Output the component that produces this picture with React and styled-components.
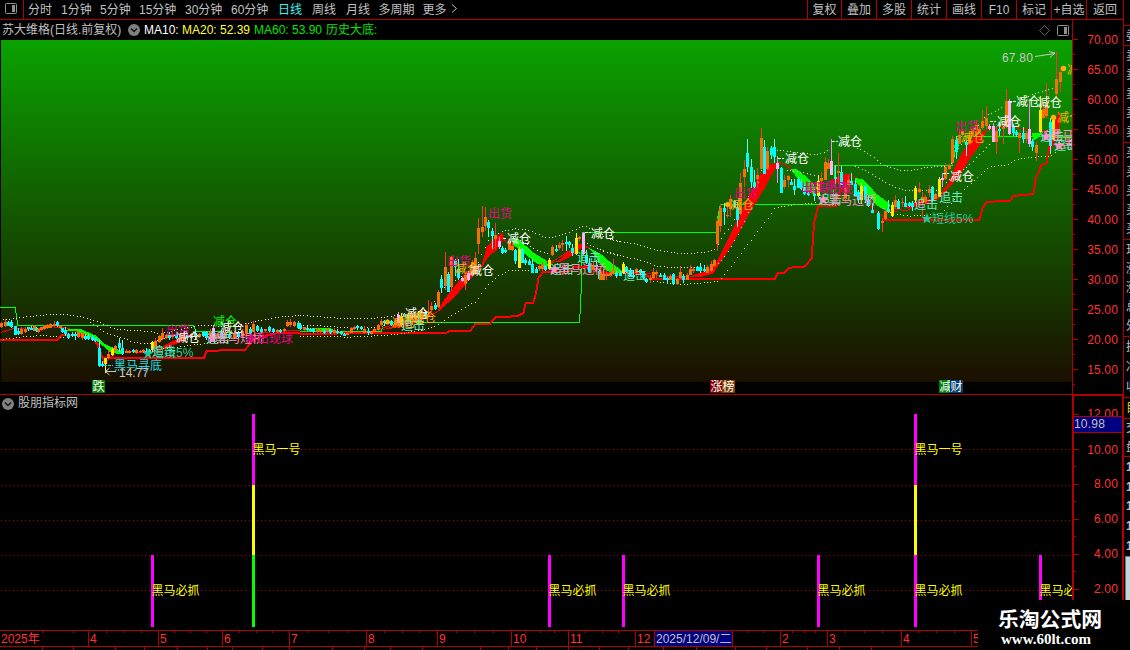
import styled, { createGlobalStyle } from "styled-components";

const RED = "#b00000";

const GlobalStyle = createGlobalStyle`
  * {
    box-sizing: border-box;
  }
  body {
    margin: 0;
    background: #000;
    color: #c0c0c0;
    font-family: "Liberation Sans", "Noto Sans CJK SC", sans-serif;
    font-size: 12px;
    overflow: hidden;
  }
`;

const Desk = styled.div`
  position: relative;
  display: flex;
  width: 1130px;
  height: 650px;
  overflow: hidden;
  background: #000;
`;

const Main = styled.div`
  display: flex;
  flex-direction: column;
  width: 1123px;
`;

const Toolbar = styled.div`
  display: flex;
  height: 20px;
  border-bottom: 1px solid ${RED};
  line-height: 20px;
`;

const PanelToggle = styled.div`
  display: flex;
  align-items: center;
  width: 24px;
  margin-right: 4px;
  padding-left: 5px;
  padding-bottom: 2px;
  border-right: 1px solid ${RED};
`;

const Period = styled.span`
  width: ${(p) => p.$w}px;
  white-space: nowrap;
  color: ${(p) => (p.$active ? "#40f0f0" : "#c0c0c0")};
`;

const Tools = styled.div`
  display: flex;
  margin-left: auto;
`;

const Tool = styled.span`
  width: 35px;
  height: 19px;
  border-left: 1px solid ${RED};
  text-align: center;
  white-space: nowrap;

  &:first-child {
    width: 34px;
  }
  &:last-child {
    width: 37px;
  }
`;

const Pane = styled.div`
  display: flex;
  height: ${(p) => p.$h}px;
`;

const Plot = styled.div`
  width: 1072px;
  border-bottom: ${(p) => (p.$line ? `1px solid ${RED}` : "none")};

  svg {
    display: block;
  }
`;

const TitleRow = styled.div`
  display: flex;
  align-items: center;
  height: ${(p) => p.$h}px;
  padding-left: 2px;
  line-height: ${(p) => p.$h}px;
  white-space: nowrap;
`;

const TitleText = styled.span`
  width: ${(p) => p.$w}px;
  margin-left: ${(p) => p.$left || 0}px;
  color: ${(p) => p.$color || "#c0c0c0"};
`;

const TitleIcons = styled.span`
  display: flex;
  align-items: center;
  gap: 7px;
  margin-left: auto;
  margin-right: 3px;
`;

const PriceAxis = styled.div`
  width: 51px;
  padding-top: 5px;
  border-left: 1px solid ${RED};
  border-bottom: 1px solid ${RED};
  overflow: hidden;
`;

const ValueAxis = styled.div`
  width: 51px;
  margin-top: -1px;
  border: solid ${RED};
  border-width: 2px 1px 0 2px;
`;

const AxisRow = styled.div`
  display: flex;
  align-items: center;
  justify-content: space-between;
  height: ${(p) => p.$h || 30}px;
  padding-right: ${(p) => p.$pad || 5}px;
  padding-bottom: 1px;
  color: #ff3232;
  letter-spacing: 0.15px;
  background: linear-gradient(${RED}, ${RED}) 0 100% / 2px 1px no-repeat;

  &::before {
    content: "";
    width: 5px;
    height: 1px;
    background: ${RED};
  }
`;

const AxisClip = styled.div`
  height: 20px;
  overflow: hidden;
`;

const Current = styled.div`
  height: 17px;
  border: solid ${RED};
  border-width: 1px 0;
  background: #000080;
  line-height: 15px;
  letter-spacing: 0.2px;
`;

const TimeAxis = styled.div`
  display: flex;
  height: 17px;
  border-top: 1px solid ${RED};
  border-bottom: 1px solid ${RED};
  line-height: 16px;
  color: #ff3232;
`;

const marks = (list, h) =>
  list.map((t) => `linear-gradient(${RED}, ${RED}) ${t}px 0 / 1px ${h}px no-repeat`).join(",") || "none";

const Month = styled.span`
  flex: none;
  width: ${(p) => p.$w}px;
  padding-left: 1px;
  border-left: ${(p) => (p.$first ? "none" : `1px solid ${RED}`)};
  white-space: nowrap;
  background: ${(p) => (p.$selected ? "#000080" : marks(p.$ticks, 2))};
  color: ${(p) => (p.$selected ? "#c0c0c0" : "inherit")};
`;

const Footer = styled.div`
  height: 3px;
  background: ${(p) => marks(p.$ticks, 3)};
`;

const Side = styled.div`
  width: 7px;
  border-left: 1px solid ${RED};
  overflow: hidden;
`;

const SideBlock = styled.div`
  display: flex;
  flex-direction: column;
  justify-content: space-around;
  height: ${(p) => p.$h}px;
  padding-left: 2px;
  border-bottom: ${(p) => (p.$bold ? "none" : `1px solid ${RED}`)};
  color: ${(p) => p.$color || "#c0c0c0"};
  font-weight: ${(p) => (p.$bold ? 700 : 400)};
  line-height: 1;
  overflow: hidden;
`;

const ScrollThumb = styled.div`
  height: 44px;
  margin-left: 1px;
  border: solid #707880;
  border-width: 1px 0 0 1px;
  background: #c4d4dc;
`;

const Brand = styled.div`
  position: absolute;
  left: 978px;
  top: 600px;
  width: 152px;
  height: 50px;
  padding: 6px 0 0 20px;
  background: #000;
  color: #fff;
`;

const BrandName = styled.div`
  font: 700 20.8px/24px "Noto Sans CJK SC", sans-serif;
  white-space: nowrap;
`;

const BrandUrl = styled.div`
  padding: 1px 0 0 3px;
  font: 700 15px/16px "Liberation Serif", serif;
`;

const periods = [
  ["分时", 33], ["1分钟", 39], ["5分钟", 39], ["15分钟", 46], ["30分钟", 46], ["60分钟", 47],
  ["日线", 34], ["周线", 34], ["月线", 32.5], ["多周期", 44], ["更多", 28],
];
const tools = ["复权", "叠加", "多股", "统计", "画线", "F10", "标记", "+自选", "返回"];
const prices = ["70.00", "65.00", "60.00", "55.00", "50.00", "45.00", "40.00", "35.00", "30.00", "25.00", "20.00", "15.00"];

const months = [
  ["2025年", 88, [42, 73]], ["4", 70, [17, 34, 52]], ["5", 64, [15, 31, 47]], ["6", 67, [16, 33, 49]],
  ["7", 77, [18, 38, 57]], ["8", 71, [17, 35, 52]], ["9", 74, [18, 36, 55]], ["10", 57, [13, 28, 42]],
  ["11", 67, [16, 33, 49]], ["12", 19, []], ["2025/12/09/二", 78, [], true], ["", 48, [14, 30]],
  ["2", 47, [11, 23, 34]], ["3", 74, [17, 36, 54]], ["4", 70, [16, 34, 52]], ["5", 40, []],
];
const footTicks = [42, 73, 115, 144, 177, 207, 232, 262, 289, 332, 364, 390, 422, 480, 508, 536, 568, 599, 628, 663, 696, 735, 766, 807, 839, 871];

const sideBlocks = [
  [26, ""], [20, "委"], [97, "卖卖卖卖卖"], [97, "买买买买买"], [97, "现涨涨总外"], [61, "换净收"],
  [21, "目", "#d8d800"], [38, "交盘"], [99, "11111", "#c0c0c0", true],
];

// each sheet holds its own origin, points inside it are in thirds of a pixel
const sheets = [
  { x: 0, y: 290 },
  { x: 300, y: 200 },
  { x: 600, y: 120 },
  { x: 840, y: 40 },
];

const tint = { o: "#f47008", c: "#00ffff", y: "#ffe800", p: "#ffb0ff" };
const wick = { o: "#ff3232", c: "#54ffff", y: "#ffff00", p: "#ff80ff" };

// x, high, body top, body bottom, low, colour
const candles = [
  `5 97 100 110 115 o,17 88 97 108 112 o,25 92 95 108 108 c,34 90 97 112 115 c,46 108 108 135 135 c,55 115 123 132 135 c,65 112 116 132 135 o,75 110 116 125 128 o,84 110 112 118 122 c,94 108 113 121 121 c,103 106 109 122 122 o,108 112 114 123 125 c,114 115 118 126 130 o,124 110 112 120 124 o,133 105 108 118 120 o,142 102 105 114 117 o,152 100 103 113 115 o,162 92 101 108 110 o,173 93 97 108 110 c,180 104 106 115 118 o,187 113 115 125 128 c,196 110 120 133 137 c,206 128 131 143 147 c,216 126 132 138 140 c,227 125 132 137 150 c,236 123 127 140 143 o,246 125 130 145 149 o,256 132 137 148 150 c,266 132 138 146 150 c,276 136 140 151 154 c,286 143 145 154 156 c,298 148 175 228 230 c,307 213 222 227 230 c,316 203 205 222 248 y,326 180 193 203 207 o,337 174 178 196 198 y,347 165 169 182 183 o,359 143 158 173 186 c,368 151 175 191 194 c,379 178 182 188 190 o,389 180 182 188 190 o,401 177 180 187 188 c,410 178 181 188 191 o,420 180 182 187 190 o,430 178 180 187 190 o,438 175 182 192 200 c,447 177 181 190 196 c,457 154 156 180 185 y,467 145 154 178 182 o,477 135 139 157 160 o,487 115 128 148 150 o,498 133 136 143 147 o,508 125 133 145 150 c,518 128 135 142 148 o,530 130 133 143 147 c,540 128 133 142 148 o,551 125 132 143 146 o,562 130 134 143 150 c,573 128 131 145 148 o,585 116 130 140 150 c,597 128 132 140 143 o,609 125 127 138 142 c,619 124 127 145 150 c,630 118 126 148 150 o,641 105 113 154 157 p,652 128 132 144 148 o,664 126 130 143 148 c,676 124 130 142 148 o,689 128 132 144 147 c,702 123 131 143 148 o,714 122 126 140 145 c,727 118 123 137 140 o,739 100 105 130 135 o,750 112 118 130 134 c,761 93 101 125 127 o,773 105 108 124 127 c,785 112 116 125 128 c,796 116 117 122 125 o,808 108 111 124 126 c,819 115 118 127 129 c,831 118 120 126 128 o,841 117 121 126 128 c,852 114 117 123 125 o,862 91 95 108 112 o,872 88 95 106 110 o,884 92 97 108 112 o,894 92 99 113 118 c`,
  `2 370 375 388 390 c,12 380 382 390 392 o,22 378 383 389 392 c,31 383 386 392 394 c,41 385 388 395 398 c,51 384 388 394 398 o,62 386 390 397 399 o,72 388 392 399 402 c,82 385 388 396 400 o,92 386 391 398 402 c,102 384 389 398 401 o,113 388 392 398 402 c,123 392 395 402 404 c,133 398 401 407 408 c,143 394 398 404 405 o,154 380 383 398 400 o,163 378 381 388 389 o,173 376 378 385 389 c,183 379 382 388 391 c,193 377 387 400 402 o,204 385 392 400 405 c,214 392 394 403 404 o,224 383 386 396 398 o,235 372 376 390 392 o,245 358 364 374 377 o,254 360 362 370 374 c,263 358 362 370 373 o,275 360 363 375 378 c,285 355 360 374 378 o,295 335 345 370 374 p,304 340 348 375 378 y,313 338 341 350 352 c,325 342 345 360 365 c,335 341 345 358 362 o,345 342 345 352 354 p,355 336 340 354 358 c,367 330 336 350 352 o,377 332 336 350 353 c,385 300 344 352 355 o,395 305 318 330 337 o,406 308 315 328 330 c,415 270 276 320 324 o,425 225 238 263 280 c,436 155 200 258 270 o,445 215 222 275 276 c,454 168 172 262 272 o,466 176 180 200 228 c,475 178 208 235 240 c,487 231 235 243 245 p,497 220 224 252 270 o,506 215 220 240 242 p,517 180 187 225 230 o,527 156 174 218 220 o,535 55 85 132 162 o,547 18 82 96 112 o,557 20 52 77 93 o,566 59 66 84 112 c,577 83 94 108 146 c,587 70 104 118 146 o,598 112 122 142 146 p,607 138 144 158 161 c,617 144 150 155 158 c,628 115 123 149 151 o,637 130 138 149 152 o,647 146 150 182 192 c,658 140 146 204 205 y,668 144 147 188 190 c,677 174 180 188 195 c,687 178 184 194 196 c,697 178 192 218 219 c,709 200 206 218 219 c,718 192 198 208 212 o,727 186 195 207 212 o,737 194 198 210 213 c,748 174 180 208 210 y,758 135 142 165 167 o,768 135 147 152 155 c,778 126 134 145 150 o,788 120 130 136 153 o,799 108 126 132 153 c,809 122 127 134 143 c,818 132 143 160 167 c,829 100 115 163 165 y,839 107 111 118 124 o,850 95 98 162 165 p,860 150 165 187 192 c,869 174 190 215 219 c,880 186 194 211 226 o,889 180 195 202 214 c,898 210 214 238 240 c,909 206 223 240 241 o,919 210 221 229 240 o,930 216 222 227 230 o,940 176 206 216 225 o,950 213 218 227 235 c`,
  `2 450 455 480 481 o,11 455 461 480 481 o,21 459 462 468 469 o,32 453 458 466 468 o,41 440 447 461 462 o,50 452 458 466 472 c,61 452 459 467 469 c,70 426 432 460 461 y,80 438 441 455 458 c,90 445 450 470 471 c,100 450 465 472 475 c,110 443 447 460 468 o,121 446 450 458 462 c,130 453 457 475 478 c,140 473 477 486 490 c,150 464 474 480 488 o,160 445 457 475 476 o,170 450 457 462 475 o,182 460 464 471 472 c,192 460 466 479 480 c,201 470 474 480 491 c,211 463 467 480 481 o,220 460 462 492 495 c,232 475 478 491 495 o,241 438 455 473 476 o,251 462 467 479 488 c,262 460 464 480 481 o,271 435 447 465 466 o,281 440 448 453 458 o,293 438 442 452 454 c,302 430 442 454 458 c,313 435 448 453 457 c,323 434 441 458 460 o,333 422 432 454 455 o,343 416 420 437 441 o,352 294 303 372 392 o,361 252 264 318 337 o,373 250 264 276 315 c,382 262 284 288 294 o,392 226 238 268 290 o,403 240 244 262 263 c,412 245 262 300 322 c,421 160 190 282 284 o,433 120 147 170 200 o,442 58 99 140 155 c,454 118 142 186 204 c,463 150 187 201 208 c,472 145 166 176 203 o,484 24 53 147 148 o,493 60 82 161 162 c,502 80 92 148 150 o,514 78 84 104 118 c,523 56 82 110 130 c,532 108 130 146 188 p,544 140 145 218 220 c,553 166 181 201 208 o,565 166 169 181 201 o,574 178 186 194 196 c,583 178 198 210 224 c,595 170 177 203 205 c,604 176 186 207 209 c,613 196 208 222 224 c,625 214 219 226 228 c,643 204 220 228 242 c,655 165 182 228 230 y,664 155 175 183 190 o,676 112 126 180 181 o,685 118 128 146 148 o,694 57 123 164 166 p,706 135 172 178 192 c,715 98 152 158 192 o,725 138 156 184 196 c,736 188 201 236 248 o,746 174 181 196 200 o`,
  `4 388 397 434 436 c,16 432 440 474 488 o,25 406 420 436 438 o,35 398 422 434 436 c,46 420 433 467 468 c,55 450 456 480 490 c,65 430 437 480 492 y,76 434 438 480 490 c,86 465 480 498 500 c,97 490 510 518 520 c,115 512 519 568 570 c,127 535 543 550 576 o,136 506 514 538 540 o,145 480 508 516 520 c,157 485 495 527 530 y,166 465 480 500 508 o,175 478 482 506 508 c,187 474 485 490 500 o,196 468 489 500 502 c,208 485 489 499 501 c,217 482 489 500 512 c,226 437 444 480 488 y,238 427 447 455 458 o,247 456 472 488 532 o,257 465 472 487 492 o,268 435 448 459 470 o,277 438 442 482 485 c,287 460 463 476 478 o,298 410 417 471 472 y,307 398 414 420 440 p,316 368 381 417 420 o,328 372 374 388 390 o,338 288 297 370 374 o,349 288 301 336 358 c,358 266 286 311 312 o,367 266 270 285 290 o,379 300 305 316 348 c,388 282 286 312 316 o,397 264 268 288 290 o,409 240 256 284 286 o,418 262 266 276 278 o,428 210 243 264 270 o,439 198 235 258 268 o,448 252 258 267 270 p,460 248 258 305 306 p,469 258 274 306 342 o,478 246 267 272 288 c,490 248 262 268 312 o,499 148 184 262 264 o,508 178 184 282 284 p,520 252 262 278 288 c,529 270 275 286 292 c,538 275 280 294 338 o,550 262 280 298 308 c,559 274 280 298 308 o,568 182 268 312 320 p,578 298 302 320 332 c,589 307 316 340 362 o,601 168 210 276 278 y,610 180 207 234 236 o,619 130 196 229 234 o,631 235 247 318 342 c,640 230 239 298 300 y,649 37 118 161 176 o,661 84 97 126 156 o`,
];

// [sheet, points]
const redBands = [
  [0, "465,190 495,165 548,138 600,130 560,148 500,174"],
  [1, "245,390 300,372 345,355 412,335 425,310 450,275 500,215 545,195 560,140 590,108 608,100 612,115 590,150 565,170 550,195 500,250 460,295 415,335 370,360 300,382"],
  [1, "755,188 775,182 800,160 835,132 850,138 820,165 780,186"],
  [2, "270,468 325,450 345,435 390,345 440,240 485,155 510,135 540,125 528,140 500,195 460,260 405,360 340,460 300,472"],
  [2, "688,188 700,176 720,166 750,162 750,190"],
  [3, "0,400 26,405 0,425"],
  [3, "190,506 230,483 290,474 325,430 350,370 365,340 395,298 440,272 420,315 390,355 370,390 330,440 300,474 240,500"],
  [3, "596,276 640,262 652,228 660,212 660,250 648,300 632,330 622,330 630,280"],
];

const greenBands = [
  [0, "185,120 240,116 290,138 315,162 345,176 368,182 368,194 330,187 300,160 270,140 230,124"],
  [1, "30,384 90,384 120,398 60,392"],
  [1, "640,118 656,118 700,158 740,182 745,200 710,190 670,158 640,135"],
  [1, "868,145 900,160 935,190 960,208 960,217 920,213 895,180"],
  [2, "-20,400 0,404 50,440 68,458 30,458 0,430"],
  [2, "352,310 356,285 361,260 361,318"],
  [2, "572,148 590,147 630,180 652,205 640,222 612,210 596,180"],
  [3, "45,414 70,418 110,462 150,492 145,518 110,495 80,462 50,430"],
  [3, "575,280 608,278 592,296 580,300"],
  [3, "342,325 346,302 358,286 358,320"],
];

const thinRed = [
  [0, "3,127 40,116 100,118 150,110 200,114 250,132 288,146 298,170 306,196 312,222 340,195 360,185 400,186 450,186 490,172 560,140 620,132 700,142 780,130 840,122 900,120"],
  [1, "0,383 60,388 120,396 200,398 260,380 300,370"],
  [1, "600,100 620,128 640,138 660,125 700,160 750,190 840,132 868,145"],
  [2, "0,460 60,460 130,458 200,470 270,470 330,462"],
  [2, "510,140 535,126 560,136 575,150"],
  [3, "0,420 60,435 96,505 130,530 160,506 200,512 240,488 300,470"],
  [3, "30,402 60,420 110,470 150,512 175,516"],
  [3, "400,295 440,270 510,258 560,270 590,290"],
];

const heavyRed = [
  [0, "0,150 170,150 185,135 240,134 280,146 293,166 303,200 312,204 612,204 619,184 664,181 735,180 755,155 790,138 830,130 900,130"],
  [1, "0,403 100,403 120,398 440,398 448,393 510,393 525,373 570,371 588,351 650,349 670,340 677,310 700,308 708,280 715,235 728,217 800,216 825,200 880,200 895,217 960,219"],
  [2, "60,458 130,460 155,476 525,476 533,460 552,458 568,443 614,440 635,415 642,310 655,258 708,258 722,215 735,190"],
  [3, "130,541 418,541 428,502 440,486 510,482 520,468 580,462 588,412 605,375 620,370 628,320 640,300 668,300"],
];

const greenSteps = [
  [0, "0,52 46,52 53,106 580,106 588,124 642,124 700,128"],
  [1, "0,395 245,395 247,380 260,368 838,368 841,330 844,260 847,97 1248,97"],
  [2, "348,337 352,300 361,253 700,253 705,136 855,136"],
  [3, "-10,376 338,376 345,330 350,290 696,290"],
];

const dots = [
  ["#fff", 0, "8,88 90,78 140,73 200,73 250,80 290,92 340,115 390,120 440,122 480,130 530,118 600,105 700,108 780,90 850,78 900,75"],
  ["#fff", 0, "270,95 320,130 360,140 400,155 450,161 490,143 560,128"],
  ["#ffff00", 0, "8,146 60,140 130,134 190,142"],
  ["#ffff00", 0, "480,176 560,166 640,156 700,150"],
  ["#fff", 1, "0,344 70,350 140,355 240,352 300,342 370,332 405,303 440,250 470,238 530,195 565,118 600,95 640,85 680,87 740,113 780,105 820,90 850,76 880,88 920,110 960,124"],
  ["#fff", 1, "0,373 70,377 150,383 220,381 260,372"],
  ["#fff", 1, "640,112 670,126 700,145 745,160"],
  ["#fff", 1, "850,125 900,148 960,168"],
  ["#ffff00", 1, "0,407 150,410 280,403 360,390 410,375 450,348 490,322 530,302 560,255 590,228 630,209 690,211"],
  ["#fff", 2, "0,345 40,360 110,372 180,391 240,400 300,397 345,388 365,350 395,312 420,270 445,225"],
  ["#fff", 2, "10,392 70,408 130,422 170,438 240,442 320,440 360,425 395,375 430,310 460,235 484,150"],
  ["#fff", 2, "530,90 560,92 640,103 670,98 690,84"],
  ["#fff", 2, "560,150 600,155 650,167"],
  ["#ffff00", 2, "160,482 240,493 300,488 355,482 390,440 440,375 490,310 525,262 570,255 650,246"],
  ["#fff", 3, "0,300 55,325 85,340 130,375 170,388 210,390 250,382 330,375 355,320 400,268 440,225 480,203 530,180 570,165 600,155 645,142"],
  ["#fff", 3, "45,378 85,395 110,412 160,438 200,450 290,450 340,405 380,380 430,330 460,300"],
  ["#ffff00", 3, "130,505 160,520 210,527 300,521 340,480 390,430 450,378 500,373 530,357 580,350 630,348 650,330"],
];

const project = (sheet, points) =>
  points.split(" ").map((pt) => {
    const [x, y] = pt.split(",");
    return [sheets[sheet].x + x / 3, sheets[sheet].y + y / 3];
  });

const toPoints = (sheet, points) => project(sheet, points).map((p) => p.join(",")).join(" ");

function spread(sheet, points) {
  const line = project(sheet, points);
  const out = [];
  let i = 0;
  for (let x = line[0][0]; x < line[line.length - 1][0]; x += 3.36) {
    while (line[i + 1][0] < x) i++;
    const [x1, y1] = line[i];
    const [x2, y2] = line[i + 1];
    out.push([Math.round(x), Math.round(y1 + ((y2 - y1) * (x - x1)) / (x2 - x1))]);
  }
  return out;
}

// text, x, vertical centre, colour
const WHITE = "#fff";
const AMBER = "#ffb000";
const PINK = "#ff90c8";
const ROSE = "#e8008c";
const AQUA = "#68ead0";
const TEAL = "#22c89c";
const notes = [
  ["出货", 166, 330, ROSE], ["减仓", 176, 337, WHITE], ["减仓", 213, 321, "#00ff00"], ["减仓", 220, 327, WHITE],
  ["追击", 152, 351, AQUA], ["★", 142, 353, TEAL], ["短线5%", 152, 352.5, TEAL], ["追击", 206, 338, AQUA], ["★", 206, 338, PINK],
  ["黑马短桥", 216, 338, PINK], ["★出现球", 245, 338, ROSE], ["黑马寻底", 114, 365, "#20d8e8"],
  ["出货", 447, 261, ROSE], ["减仓", 455, 268, AMBER], ["减仓", 470, 270.5, WHITE], ["出货", 488, 213, ROSE],
  ["减仓", 507, 238, WHITE], ["减仓", 591, 233, WHITE], ["减仓", 405, 313, WHITE], ["减仓", 392, 322, AMBER],
  ["减仓", 401, 318, AMBER], ["减仓", 412, 317, AMBER], ["追击", 401, 325, AQUA], ["追击", 577, 257, AQUA],
  ["追击", 550, 269, AQUA], ["★", 548, 269, PINK], ["黑马过桥", 558, 269, PINK], ["追击", 623, 275, AQUA],
  ["出货", 734, 193, ROSE], ["减仓", 730, 204, AMBER], ["减仓", 785, 158, WHITE], ["减仓", 838, 141.5, WHITE],
  ["出现黑马", 801, 187, ROSE], ["黑马出现", 805, 188, ROSE], ["追击", 818, 199, AQUA], ["★", 817, 199, PINK],
  ["黑马过桥", 828, 200, PINK], ["追击", 914, 204, AQUA], ["追击", 939, 197, AQUA], ["★", 921, 218, TEAL], ["短线5%", 932, 218, TEAL],
  ["减仓", 950, 176, WHITE], ["出货", 955, 126, ROSE], ["减仓", 961, 137, AMBER], ["减仓", 997, 121.5, WHITE],
  ["减仓", 1016, 101.5, WHITE], ["减仓", 1038, 102, WHITE], ["减仓", 1057, 117, AMBER], ["减仓", 1067, 69, AMBER],
  ["追击", 1040, 136, AQUA], ["★", 1040, 136, PINK], ["黑马", 1050, 135, PINK], ["追击", 1054, 145, AQUA],
  ["★", 1053, 145, PINK], ["黑马", 1063, 143, PINK],
];
const leaders = [
  [104, 365, 113], [503, 238, 507], [585, 232, 591], [778, 158, 784], [832, 141, 838], [943, 173, 949],
  [990, 121, 996], [1009, 101, 1016],
];

const flags = [
  ["跌", 92, "#008000"], ["涨", 710, "#800000"], ["榜", 722, "#804000"], ["减", 939, "#008000"], ["财", 950, "#003c70"],
];

const signals = [
  [151, [[555, 627, "#f0f"]], "黑马必抓"],
  [252, [[414, 485, "#f0f"], [485, 555, "#ff0"], [555, 627, "#0f0"]], "黑马一号"],
  [548, [[555, 627, "#f0f"]], "黑马必抓"],
  [622, [[555, 627, "#f0f"]], "黑马必抓"],
  [817, [[555, 627, "#f0f"]], "黑马必抓"],
  [914, [[414, 485, "#f0f"], [485, 555, "#ff0"], [555, 627, "#f0f"]], "黑马一号"],
  [914, [], "黑马必抓"],
  [1039, [[555, 627, "#f0f"]], "黑马必抓"],
];

function Candle({ sheet, data }) {
  const [u, hi, top, bottom, lo, kind] = data.split(" ");
  const x = sheet.x + Math.floor(u / 3);
  const y = (v) => sheet.y + Math.round(v / 3);
  return (
    <g>
      <rect x={x} y={y(hi)} width="1" height={Math.max(1, y(lo) - y(hi))} fill={wick[kind]} />
      <rect x={x - 1} y={y(top)} width="3" height={Math.max(1, y(bottom) - y(top))} fill={tint[kind]} />
    </g>
  );
}

function Polylines({ list, color, width }) {
  return list.map(([sheet, points], i) => (
    <polyline key={i} points={toPoints(sheet, points)} fill="none" stroke={color} strokeWidth={width} />
  ));
}

function Bands({ list, color }) {
  return list.map(([sheet, points], i) => <polygon key={i} points={toPoints(sheet, points)} fill={color} />);
}

function KLine() {
  return (
    <svg width="1072" height="354" viewBox="0 40 1072 354" fontSize="12">
      <defs>
        <linearGradient id="sky" x1="0" y1="0" x2="0" y2="1">
          <stop offset="0" stopColor="#0aa200" />
          <stop offset="1" stopColor="#1c0f00" />
        </linearGradient>
      </defs>
      <rect x="1" y="40" width="1071" height="342" fill="url(#sky)" />
      <g shapeRendering="crispEdges">
        <Polylines list={greenSteps} color="#00ff00" width={1} />
        <Bands list={redBands} color="#ff0000" />
        <Polylines list={thinRed} color="#ff0000" width={1} />
        <Polylines list={heavyRed} color="#ff0000" width={2} />
        <Bands list={greenBands} color="#00ff00" />
        {dots.map(([color, sheet, points], i) =>
          spread(sheet, points).map(([x, y]) => <rect key={`${i}-${x}`} x={x} y={y} width="1" height="1" fill={color} />)
        )}
        {candles.map((group, i) => group.split(",").map((c) => <Candle key={c} sheet={sheets[i]} data={c} />))}
      </g>
      {leaders.map(([x1, y, x2]) => (
        <path key={`${x1}-${y}`} d={`M${x1} ${y + 0.5}H${x2}`} stroke={x1 === 104 ? "#20d8e8" : "#fff"} strokeDasharray="3 1" />
      ))}
      {notes.map(([text, x, y, color], i) => (
        <text key={i} x={x} y={y + 4.5} fill={color}>{text}</text>
      ))}
      <circle cx="1063.5" cy="68.5" r="2.7" fill={AMBER} />
      <circle cx="1053.5" cy="117.5" r="2.7" fill={AMBER} />
      <circle cx="387.5" cy="322" r="2.5" fill={AMBER} />
      <circle cx="727.5" cy="204.5" r="2.5" fill={AMBER} />
      <g fill="none" stroke="#c8c8c8">
        <path d="M1035 56.5L1055 53.5M1049 51.5L1055 53L1050 57.5" />
        <path d="M116 371.5H106M109.5 368L105.5 371.5L109.5 375" />
      </g>
      <text x="1002" y="62" fill="#c8c8c8" letterSpacing=".2">67.80</text>
      <text x="119" y="376.5" fill="#c8c8c8">14.77</text>
      {flags.map(([text, x, color]) => (
        <g key={text}>
          <rect x={x} y="380" width="13" height="13" fill={color} />
          <text x={x + 0.5} y="391" fill="#fff">{text}</text>
        </g>
      ))}
    </svg>
  );
}

function SignalChart() {
  return (
    <svg width="1072" height="218" viewBox="0 412 1072 218" fontSize="12" shapeRendering="crispEdges">
      {[449, 485, 520, 555, 590].map((y) => (
        <path key={y} d={`M1 ${y + 0.5}H1072`} stroke="#b00000" strokeDasharray="1 3" />
      ))}
      {signals.map(([x, parts, text], i) => (
        <g key={i}>
          {parts.map(([top, bottom, color]) => (
            <rect key={top} x={x} y={top} width="3" height={bottom - top} fill={color} />
          ))}
          <text x={x + 0.5} y={text === "黑马一号" ? 453.5 : 594.5} fill="#ffff00">{text}</text>
        </g>
      ))}
    </svg>
  );
}

function Chevron() {
  return (
    <svg width="12" height="12" viewBox="0 0 12 12">
      <circle cx="6" cy="6" r="6" fill="#808080" />
      <path d="M3 4.500L6 7.500L9 4.500" fill="none" stroke="#111" strokeWidth="1.400" />
    </svg>
  );
}

function SplitIcon() {
  return (
    <svg width="12" height="11" viewBox="0 0 12 11">
      <rect x=".5" y=".5" width="11" height="10" rx="1" fill="none" stroke="#909090" />
      <rect x="7" y="2" width="3" height="7" fill="#909090" />
    </svg>
  );
}

function App() {
  return (
    <Desk>
      <GlobalStyle />
      <Main>
        <Toolbar>
          <PanelToggle><SplitIcon /></PanelToggle>
          {periods.map(([name, w]) => (
            <Period key={name} $w={w} $active={name === "日线"}>{name}</Period>
          ))}
          <svg width="8" height="19" viewBox="0 0 8 19">
            <path d="M1 4.500L5.500 8.500L1 12.500" fill="none" stroke="#c0c0c0" />
          </svg>
          <Tools>
            {tools.map((name) => <Tool key={name}>{name}</Tool>)}
          </Tools>
        </Toolbar>

        <Pane $h={375}>
          <Plot $line>
            <TitleRow $h={20}>
              <TitleText $w={126}>苏大维格(日线.前复权)</TitleText>
              <Chevron />
              <TitleText $w={38} $left={4} $color="#fff">MA10:</TitleText>
              <TitleText $w={72} $color="#ffff30">MA20: 52.39</TitleText>
              <TitleText $w={72} $color="#00e800">MA60: 53.90</TitleText>
              <TitleText $w={60} $color="#00e800">历史大底:</TitleText>
              <TitleIcons>
                <svg width="11" height="11" viewBox="0 0 11 11">
                  <path d="M5.500 .5L10.500 5.500L5.500 10.500L.5 5.500Z" fill="none" stroke="#606060" />
                </svg>
                <SplitIcon />
              </TitleIcons>
            </TitleRow>
            <KLine />
          </Plot>
          <PriceAxis>
            {prices.map((p) => <AxisRow key={p}>{p}</AxisRow>)}
          </PriceAxis>
        </Pane>

        <Pane $h={235}>
          <Plot>
            <TitleRow $h={17}>
              <Chevron />
              <TitleText $w={70} $left={4}>股朋指标网</TitleText>
            </TitleRow>
            <SignalChart />
          </Plot>
          <ValueAxis>
            <AxisClip>
              <AxisRow $h={37} $pad={4}>12.00</AxisRow>
            </AxisClip>
            <Current>10.98</Current>
            <AxisRow $h={34} $pad={4}>10.00</AxisRow>
            {["8.00", "6.00", "4.00", "2.00"].map((v) => <AxisRow key={v} $h={35} $pad={4}>{v}</AxisRow>)}
          </ValueAxis>
        </Pane>

        <TimeAxis>
          {months.map(([name, w, ticks, selected], i) => (
            <Month key={i} $w={w} $ticks={ticks} $selected={selected} $first={i === 0}>{name}</Month>
          ))}
        </TimeAxis>
        <Footer $ticks={footTicks} />
      </Main>

      <Side>
        {sideBlocks.map(([h, text, color, bold], i) => (
          <SideBlock key={i} $h={h} $color={color} $bold={bold}>
            {[...text].map((c, j) => <span key={j}>{c}</span>)}
          </SideBlock>
        ))}
        <ScrollThumb />
      </Side>

      <Brand>
        <BrandName>乐淘公式网</BrandName>
        <BrandUrl>www.60lt.com</BrandUrl>
      </Brand>
    </Desk>
  );
}

export default App;
